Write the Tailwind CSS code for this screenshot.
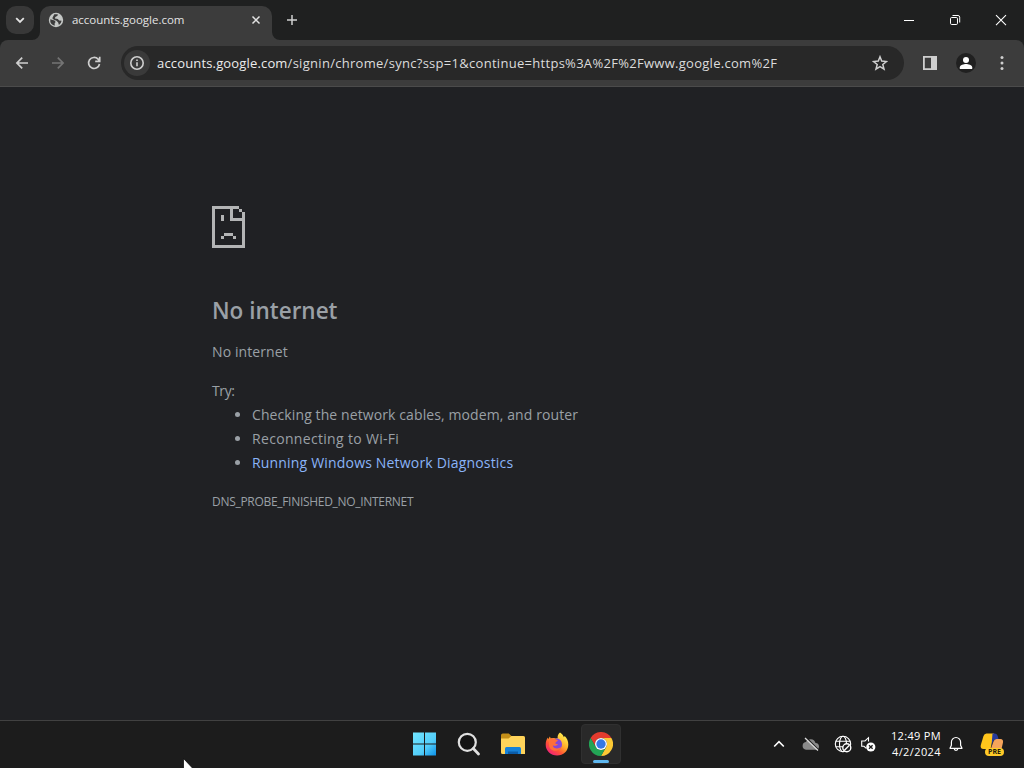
<!DOCTYPE html>
<html lang="en">
<head>
  <meta charset="UTF-8" />
  <meta name="viewport" content="width=device-width, initial-scale=1.0" />
  <title>accounts.google.com</title>
  <script src="https://cdn.jsdelivr.net/npm/@tailwindcss/browser@4"></script>
</head>
<body class="relative w-[1024px] h-[768px] overflow-hidden flex flex-col bg-[#202124] font-['Open_Sans','Noto_Sans',sans-serif]">

  <!-- Tab strip -->
  <header class="h-10 shrink-0 flex bg-[#1f2020] text-[#e3e3e3]">
    <button class="mt-1.5 ml-1.5 w-7 h-7 rounded-[10px] bg-[#383838] flex items-center justify-center">
      <svg class="w-3 h-3" viewBox="0 0 12 12" fill="none" stroke="currentColor" stroke-width="1.8"><path d="M2.2 4.2 6 8l3.800-3.800" /></svg>
    </button>
    <div class="relative ml-1.5 mt-1.5 w-[232px] h-[34px] rounded-t-[10px] bg-[#3c3c3c] flex items-center pl-2 pr-2.5 pb-1.5">
      <svg class="absolute -left-2 bottom-0 w-2 h-2" viewBox="0 0 8 8"><path d="M8 0v8H0a8 8 0 0 0 8-8z" fill="#3c3c3c" /></svg>
      <svg class="absolute -right-2 bottom-0 w-2 h-2" viewBox="0 0 8 8"><path d="M0 0v8h8a8 8 0 0 1-8-8z" fill="#3c3c3c" /></svg>
      <svg class="w-4 h-4 shrink-0" viewBox="0 0 16 16">
        <circle cx="8" cy="8" r="7.200" fill="#c4c7c5" />
        <path d="M2.300 7.300 6.500 8.600l1.200 1.300-1 1.200v2.700A6 6 0 0 1 2.300 7.300zM6.300 2.300l3.500-.1-.3 1.600-2.200 1.100-.4 1.700 2.900.4 1.300 1.500 2.500.2a5.800 5.800 0 0 1-2.700 4.200l-.7-2.500-1.700-1.600-2.600-1-1.600-1.600.6-1.300z" fill="#3c3c3c" />
      </svg>
      <span class="ml-2 text-[11.500px] leading-4 tracking-[-0.02px] whitespace-nowrap">accounts.google.com</span>
      <svg class="ml-auto w-3 h-3" viewBox="0 0 12 12" fill="none" stroke="currentColor" stroke-width="1.500"><path d="m2.500 2.500 7 7m0-7-7 7" /></svg>
    </div>
    <svg class="ml-3.5 mt-3.5 w-3 h-3" viewBox="0 0 12 12" fill="none" stroke="#d0d0d0" stroke-width="1.500"><path d="M6 1v10M1 6h10" /></svg>
    <div class="ml-auto flex text-white">
      <svg class="w-[46px] h-10" viewBox="0 0 46 40" fill="none" stroke="currentColor"><path d="M18 20.500h10" /></svg>
      <svg class="w-[46px] h-10" viewBox="0 0 46 40" fill="none" stroke="currentColor"><rect x="18.500" y="17.500" width="7" height="7" rx="1.200" /><path d="M20.500 15.500H26a1.700 1.700 0 0 1 1.700 1.700v5.300" /></svg>
      <svg class="w-[46px] h-10" viewBox="0 0 46 40" fill="none" stroke="currentColor" stroke-width="1.100"><path d="m18 15.200 10 10m0-10-10 10" /></svg>
    </div>
  </header>

  <!-- Toolbar -->
  <div class="h-[47px] shrink-0 bg-[#1f2020]">
    <div class="h-full rounded-t-lg bg-[#3c3c3c] border-b border-[#4b4b4b] flex items-center text-[#cfcfcf]">
      <svg class="ml-[14px] w-4 h-4" viewBox="0 0 16 16" fill="none" stroke="currentColor" stroke-width="1.700"><path d="M14 8H3m5.200-5.300L2.900 8l5.300 5.300" /></svg>
      <svg class="ml-5 w-4 h-4 text-[#747474]" viewBox="0 0 16 16" fill="none" stroke="currentColor" stroke-width="1.700"><path d="M2 8h11M7.800 2.700 13.100 8l-5.300 5.300" /></svg>
      <svg class="ml-5 w-4 h-4" viewBox="0 0 16 16" fill="none" stroke="currentColor" stroke-width="1.700"><path d="M13.500 9a5.500 5.500 0 1 1-1.400-4.800l1.500 1.600M13.700 1.800v4.500H9.200" /></svg>
      <div class="ml-[19px] w-[783px] h-[34px] rounded-full bg-[#282828] flex items-center">
        <div class="ml-[3px] w-[26px] h-[26px] rounded-full bg-[#3a3a3a] flex items-center justify-center">
          <svg class="w-4 h-4" viewBox="0 0 16 16" fill="none" stroke="currentColor" stroke-width="1.600"><circle cx="8" cy="8" r="6.200" /><path d="M8 7.300v4M8 4.400v1.700" /></svg>
        </div>
        <span class="ml-[7px] text-[13px] leading-5 tracking-[0.29px] whitespace-nowrap text-[#dcdcdc]"><span class="text-[#ececec] tracking-[0.16px]">accounts.google.com</span>/signin/chrome/sync?ssp=1&amp;continue=https%3A%2F%2Fwww.google.com%2F</span>
        <svg class="ml-auto mr-4 w-4 h-4" viewBox="0 0 16 16" fill="none" stroke="currentColor" stroke-width="1.500"><path d="m8 1.800 1.700 4.300 4.700.4-3.600 3 1.200 4.600L8 11.600l-4 2.500 1.200-4.600-3.600-3 4.700-.4z" /></svg>
      </div>
      <svg class="ml-[18px] w-4 h-4" viewBox="0 0 16 16"><path d="M1 1h14v14H1zM2.800 2.800v10.400h6.200V2.800z" fill="currentColor" fill-rule="evenodd" /></svg>
      <div class="ml-[18px] w-5 h-5 rounded-full bg-[#202020] flex items-center justify-center text-white">
        <svg class="w-3.5 h-3.5" viewBox="0 0 14 14" fill="currentColor"><circle cx="7" cy="3.900" r="3" /><path d="M.8 13v-1.700c0-2.100 4.100-3.200 6.200-3.200s6.200 1.100 6.200 3.200V13z" /></svg>
      </div>
      <svg class="ml-[18px] w-4 h-4" viewBox="0 0 16 16" fill="currentColor"><circle cx="8" cy="2.500" r="1.500" /><circle cx="8" cy="8" r="1.500" /><circle cx="8" cy="13.500" r="1.500" /></svg>
    </div>
  </div>

  <!-- Error page -->
  <main class="flex-1 pl-[212px] pt-[119px] text-[#9aa0a6] text-[14px] leading-6">
    <!-- Sad page, drawn on an 11x14 grid -->
    <svg class="w-[33px] h-[42px]" viewBox="0 0 11 14" fill="#b3b4b5" shape-rendering="crispEdges">
      <path d="M0 0h9v1H7v3h3V2h1v12H0zM1 1v12h9V5H6V1z" fill-rule="evenodd" />
      <path d="M9 1h1v1H9zM3 3h1v2H3zM4 9h3v1H4zM3 10h1v1H3zM7 10h1v1H7z" />
    </svg>
    <h1 class="mt-[48px] text-[22.500px] leading-[30px] font-semibold whitespace-nowrap">No internet</h1>
    <p class="mt-[14px] tracking-[0.1px]">No internet</p>
    <p class="mt-[15px] tracking-[-0.4px]">Try:</p>
    <ul class="list-disc pl-10">
      <li class="tracking-[0.1px]">Checking the network cables, modem, and router</li>
      <li class="tracking-[0.32px]">Reconnecting to Wi-Fi</li>
      <li class="tracking-[0.18px]"><a class="text-[#8ab4f8]">Running Windows Network Diagnostics</a></li>
    </ul>
    <p class="mt-[15px] text-[12px] tracking-[-0.3px]">DNS_PROBE_FINISHED_NO_INTERNET</p>
  </main>

  <!-- Taskbar -->
  <footer class="h-12 shrink-0 pb-0.5 bg-[#1c1c1c] border-t border-[#414141] flex items-center text-white">
    <div class="ml-[405px] flex items-center gap-1">
      <div class="w-10 h-10 flex items-center justify-center">
        <svg class="w-6 h-6" viewBox="0 0 24 24">
          <defs><linearGradient id="win" x1="0" y1="0" x2="24" y2="24" gradientUnits="userSpaceOnUse"><stop stop-color="#72e6ff" /><stop offset=".6" stop-color="#52cdf9" /><stop offset="1" stop-color="#078ce8" /></linearGradient></defs>
          <path d="M0 .500h11v11H0zM12 .500h11v11H12zM0 12.500h11v11H0zM12 12.500h11v11H12z" fill="url(#win)" />
        </svg>
      </div>
      <div class="w-10 h-10 flex items-center justify-center">
        <svg class="w-6 h-6" viewBox="0 0 24 24" fill="none" stroke="#e0e0e0"><circle cx="10.300" cy="10.300" r="8.500" stroke-width="2.200" fill="#141414" /><path d="m16.300 16.600 5.200 5.300" stroke-width="2.800" stroke-linecap="round" /></svg>
      </div>
      <div class="w-10 h-10 flex items-center justify-center">
        <svg class="w-[26px] h-6" viewBox="0 0 26 24">
          <path d="M1 3.300Q1 1.500 2.800 1.500h6L11.500 4H23q2 0 2 2v8H1z" fill="#c48f18" />
          <path d="M1 6.500h7.500l3-2.500H23q2 0 2 2v16H2.500Q1 22 1 20.500z" fill="#ffd45a" />
          <path d="M5 22v-5.500Q5 15 6.500 15h13q1.500 0 1.500 1.500V22z" fill="#1681d8" />
          <path d="M8 22v-2.500h10V22z" fill="#0b5ca8" />
        </svg>
      </div>
      <div class="w-10 h-10 flex items-center justify-center">
        <svg class="w-6 h-6" viewBox="0 0 24 24">
          <defs>
            <linearGradient id="fox" x1="20" y1="3" x2="5" y2="22" gradientUnits="userSpaceOnUse"><stop stop-color="#fff14f" /><stop offset=".4" stop-color="#ffac28" /><stop offset=".7" stop-color="#ff5136" /><stop offset="1" stop-color="#f1217b" /></linearGradient>
          </defs>
          <path d="M15 .6c1.800 1.200 3.200 2.900 3.900 4.600l.8-1.300c2.200 2.200 3.700 5.200 3.600 8.800C23.200 19 18.400 23.500 12.100 23.500S.7 18.800.7 12.700c0-3 .8-5.300 2-7.200l.4 1.700 1.800-2.800.8 2.100c2-.8 3.800-.8 5 .1l2-.3C12.300 4.400 13 2 15 .6z" fill="url(#fox)" />
          <path d="M10.700 6.600c2.800-1 6.300 1.600 6.300 5.700a5 5 0 0 1-10 .8c0-2.800 1.500-5.500 3.700-6.500z" fill="#8548d8" />
          <path d="M5.600 6.500c2.200-.6 4.200-.1 5.300 1 .8.300 1.500.4 2 .8-.3 1.200-1.800 1.400-2.500 2.400-.5 1 1 1.600 2.600 1.300-.8 1.700-3.500 2.500-5.200 1.200.3 3.400 5.100 4.400 8.300 1.900-2.200 5.400-11 4.900-12.100-1.500-.4-2.800 0-5.100 1.600-7.100z" fill="#ff6f3a" />
        </svg>
      </div>
      <div class="relative w-10 h-10 rounded bg-[#292929] border border-[#303030] flex items-center justify-center">
        <svg class="w-6 h-6" viewBox="0 0 24 24">
          <path d="M1.600 6A12 12 0 0 1 22.400 6H12a6 6 0 0 0-5.200 9z" fill="#e33b2e" />
          <path d="M22.400 6A12 12 0 0 1 12 24l5.200-9A6 6 0 0 0 12 6z" fill="#fcc934" />
          <path d="M1.600 6 6.800 15a6 6 0 0 0 10.400 0L12 24A12 12 0 0 1 1.600 6z" fill="#23a455" />
          <circle cx="12" cy="12" r="6" fill="#fff" /><circle cx="12" cy="12" r="4.700" fill="#3478e5" />
        </svg>
        <span class="absolute left-[11px] bottom-0 w-4 h-[3px] rounded-full bg-[#5fb8f0]"></span>
      </div>
    </div>
    <div class="ml-auto flex items-center">
      <svg class="w-3 h-3" viewBox="0 0 12 12" fill="none" stroke="currentColor" stroke-width="1.600"><path d="m1.200 8.500 4.800-4.800 4.800 4.800" /></svg>
      <svg class="ml-[17px] w-[18px] h-4" viewBox="0 0 18 16"><path d="M4 13.700a3.900 3.900 0 0 1-.2-7.700 5.300 5.300 0 0 1 9.700 1 3.400 3.400 0 0 1 .9 6.700z" fill="#8a8a8a" /><path d="m4.300 1.700 12.500 12.600" stroke="#1c1c1c" stroke-width="1.500" /><path d="m3 2 13 12.500" stroke="#ddd" stroke-width="1.300" /></svg>
      <svg class="ml-[14px] w-[18px] h-[18px]" viewBox="0 0 18 18" fill="none" stroke="currentColor" stroke-width="1.100">
        <circle cx="9" cy="9" r="7.700" /><ellipse cx="9" cy="9" rx="3.500" ry="7.700" /><path d="M1.800 6.200h14.400M1.800 11.800h14.400" />
        <circle cx="12.800" cy="12.800" r="4" fill="#1c1c1c" stroke-width="1.400" /><path d="m10.200 15.400 5.200-5.200" stroke-width="1.400" />
      </svg>
      <svg class="ml-[8px] w-4 h-4" viewBox="0 0 16 16" fill="none" stroke="currentColor" stroke-width="1.100"><path d="M8.500 5.500V1.700L5 5H1.700v5.300H4l2.300 2" /><circle cx="10.800" cy="11" r="4.600" fill="#fff" stroke="none" /><path d="m9 9.200 3.600 3.600m0-3.600L9 12.800" stroke="#1c1c1c" stroke-width="1.300" /></svg>
      <div class="ml-[14px] w-[51px] text-right text-[11px] leading-4 whitespace-nowrap">
        <div class="tracking-[0.33px]">12:49 PM</div>
        <div class="tracking-[0.4px]">4/2/2024</div>
      </div>
      <svg class="ml-[7px] w-4 h-4" viewBox="0 0 16 16" fill="none" stroke="currentColor" stroke-width="1.200"><path d="M8 1.500a4.600 4.600 0 0 0-4.600 4.600v3.200L2 12.300h12l-1.400-3V6.100A4.600 4.600 0 0 0 8 1.500zM6.200 12.600a1.800 1.800 0 0 0 3.600 0" stroke-linejoin="round" /></svg>
      <div class="relative ml-4 mr-5 w-6 h-6">
        <svg class="w-6 h-6" viewBox="0 0 24 24">
          <path d="M6.500 1.500H14L10.500 17H3.500Q0 17 .8 13L3.500 4q.8-2.500 3-2.500z" fill="#ffc51c" />
          <path d="M12.500 1.500H15q2 0 2.700 2.500l1 3.500h-3q-2 0-2.700 2L11.500 14z" fill="#263a9c" />
          <path d="M16.500 7h4q3 0 2.500 3.500L21.500 17H10.800L13.500 9.500Q14.300 7 16.500 7z" fill="#f5a45b" />
        </svg>
        <span class="absolute left-[5px] bottom-0 w-[19px] h-[8px] rounded-full bg-[#ffca28] text-center text-[7px] leading-[8px] font-bold text-[#241c08]">PRE</span>
      </div>
    </div>
  </footer>

  <!-- Mouse pointer, cut off by the bottom edge -->
  <svg class="absolute left-[183px] top-[758px] w-3 h-[19px]" viewBox="0 0 12 19"><path d="M.5.500v16l3.700-3.500 2.400 5.500 2.200-1-2.400-5.300h5.100z" fill="#fff" stroke="#000" stroke-width=".7" /></svg>
</body>
</html>
